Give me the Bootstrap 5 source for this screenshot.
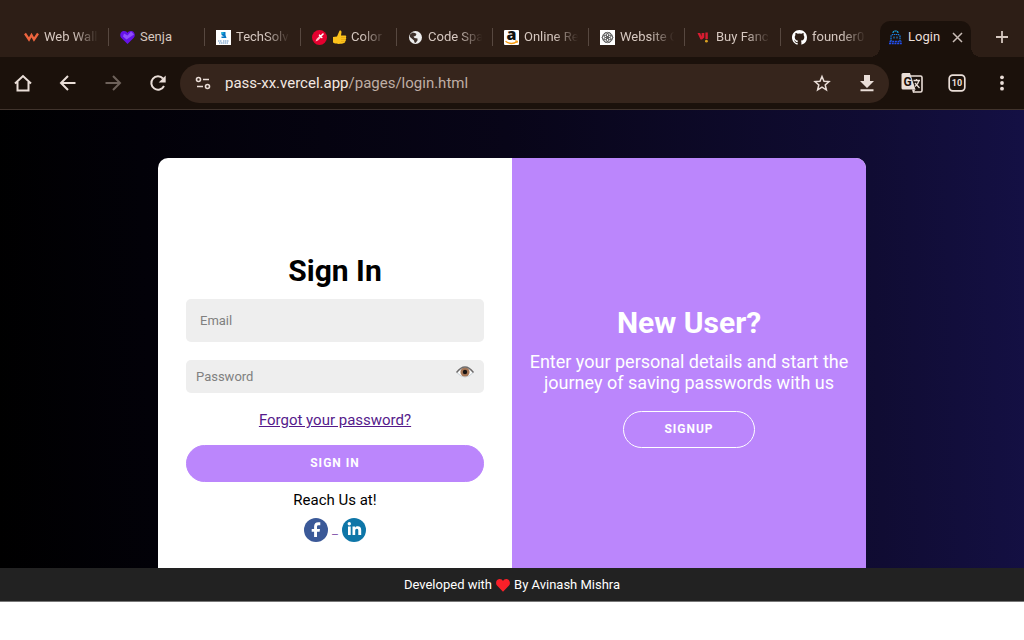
<!DOCTYPE html>
<html lang="en">
<head>
<meta charset="utf-8">
<meta name="viewport" content="width=device-width, initial-scale=1">
<title>Login</title>
<link href="https://cdn.jsdelivr.net/npm/bootstrap@5.3.0/dist/css/bootstrap.min.css" rel="stylesheet">
<style>
  body { font-family: Roboto, "Noto Sans", sans-serif; background: #fff; color: #000; }
  svg { display: block; flex: none; }

  /* Browser chrome */
  .tab-strip { background: #2d1e16; height: 57px; padding-left: 13px; }
  .tab-item { flex: 0 1 96px; min-width: 0; height: 36px; padding: 0 6px 4px 11px; gap: 5px; color: #d6c8c0; font-size: 13px; text-decoration: none; position: relative; }
  .tab-item::after { content: ""; position: absolute; right: 0; top: 7px; width: 1px; height: 18px; background: #574840; }
  .tab-item.no-line::after { display: none; }
  .tab-label { flex: 1 1 0; min-width: 0; overflow: hidden; white-space: nowrap; }
  .tab-fade { -webkit-mask-image: linear-gradient(to right, #000 50%, transparent 92%); mask-image: linear-gradient(to right, #000 50%, transparent 92%); }
  .tab-current { flex: 0 1 91px; margin-left: 3px; padding: 0 6px 4px 8px; background: #1b110b; border-radius: 10px 10px 0 0; color: #eaded8; }
  .tab-current::before, .tab-current::after { content: ""; position: absolute; top: auto; bottom: 0; width: 10px; height: 10px; background: radial-gradient(circle at 0 0, transparent 10px, #1b110b 10px); }
  .tab-current::before { left: -10px; }
  .tab-current::after { right: -10px; background: radial-gradient(circle at 100% 0, transparent 10px, #1b110b 10px); }
  .plain-btn { background: none; border: 0; padding: 0; color: #eaded8; display: flex; align-items: center; justify-content: center; }
  .new-tab { width: 45px; height: 32px; }
  .toolbar-row { background: #1b110b; height: 53px; border-bottom: 1px solid #40332c; }
  .tool-btn { width: 45px; height: 39px; flex: none; }
  .address-bar { height: 39px; border-radius: 20px; background: #36251c; color: #eaded8; }
  .address-text { font-size: 15px; line-height: 24px; color: #bfaea5; }
  .address-text b { font-weight: 400; color: #f3e8e2; }

  /* Login page */
  .login-stage { background: linear-gradient(88deg, #000 0%, #020108 15%, #080518 50%, #100c33 85%, #141044 100%); padding-top: 48px; }
  .login-card { max-width: 708px; min-height: 410px; border-radius: 10px 10px 0 0; background: #fff; overflow: hidden; }
  .form-side { padding: 95px 28px 24px; }
  .promo-side { background: #bb86fc; color: #fff; padding: 147px 16px 24px; }
  .panel-title { font-size: 30px; line-height: 36px; font-weight: 700; margin: 0 0 10px; }
  .field-box { background: #eee; border: 0; border-radius: 5px; font-size: 13px; line-height: 19px; padding: 12px 14px; }
  .field-box::placeholder { color: #808080; }
  .field-tight { padding: 7px 10px; }
  .password-row { margin: 18px 0 15px; }
  .eye-btn { position: absolute; right: 10px; top: 4px; }
  .forgot-link { color: #551a8b; font-size: 15px; line-height: 20px; margin-bottom: 15px; }
  .pill-btn { border-radius: 20px; border: 1px solid #bb86fc; background: #bb86fc; color: #fff; font-size: 12px; line-height: 17px; font-weight: 700; letter-spacing: 1px; padding: 9px 40px; }
  .pill-line { border-color: #fff; }
  .reach-text { font-size: 15px; line-height: 20px; }
  .promo-text { font-size: 18px; line-height: 21px; margin: 0 0 18px; }
  .social-links { gap: 4px; color: #8a5fb0; font-size: 13px; line-height: 24px; }
  .site-footer { background: #222; color: #fff; font-size: 13px; line-height: 19px; padding: 7px 0; border-bottom: 1px solid #777; }
</style>
</head>
<body>
<header>
  <nav class="tab-strip d-flex align-items-end" aria-label="Open tabs">
    <a class="tab-item d-flex align-items-center" href="#">
      <svg width="15" height="15" viewBox="0 0 15 15"><path d="M1 3.500l4 6 2.500-4.500 2.500 4.500 4-6" fill="none" stroke="#ed643e" stroke-width="2.300"/></svg>
      <span class="tab-label tab-fade">Web Wall</span></a>
    <a class="tab-item d-flex align-items-center" href="#">
      <svg width="15" height="15" viewBox="0 0 15 15"><path d="M7.500 14L1.200 7.800C-.7 5.600.2 1.800 3.300 1.100c1.700-.4 3.300.4 4.200 1.800C8.400 1.500 10 .7 11.700 1.100c3.100.7 4 4.500 2.100 6.700z" fill="#6512e6"/><path d="M6.500 9.500L3 6.500 4 3.500l3.500 2 3.500-4 3 3z" fill="#8f4ffa"/></svg>
      <span class="tab-label">Senja</span></a>
    <a class="tab-item d-flex align-items-center" href="#">
      <svg width="15" height="15" viewBox="0 0 15 15"><path fill="#fff" d="M0 0h15v15H0z"/><path d="M5.500 2h4v3l1 3h-5V6.500H8L5.500 5z" fill="#0878c4"/><path d="M5.500 2h2v2h-2z" fill="#20b6dc"/><path d="M2 11h4M7 11h6M3 13h9" stroke="#5b8bc0" stroke-width="1.200" stroke-dasharray="1.500 .5"/></svg>
      <span class="tab-label tab-fade">TechSolv</span></a>
    <a class="tab-item d-flex align-items-center" href="#">
      <svg width="15" height="15" viewBox="0 0 15 15"><circle cx="7.500" cy="7.500" r="7.500" fill="#e4002f"/><path d="M3.500 11.500l1-2.500 3.500-3.500 1.500 1.500L6 10.500z" fill="#ffc0cb"/><path d="M7.500 5.200l2.300 2.300M8.700 6.300l2.300-2.300" stroke="#fff" stroke-width="1.600" stroke-linecap="round"/></svg>
      <span class="tab-label tab-fade d-flex align-items-center gap-1"><svg width="15" height="15" viewBox="0 0 15 15"><path d="M1 7l4-.5L7.500.8c.9-.9 2.200.1 2 1.500L9 5.500h4c1.300 0 1.700 1.600.7 2 .8.500.7 1.700-.1 2 .5.700.3 1.600-.5 1.900.3.800-.2 1.600-1.100 1.600-2.500 1.200-7.500 1-9 .5L1 12.500z" fill="#fcc21b"/><path d="M9 7.500h4M9 9.500h4M9 11.500h3.500" stroke="#df9c12" stroke-width=".6"/></svg>Color</span></a>
    <a class="tab-item d-flex align-items-center" href="#">
      <svg width="15" height="15" viewBox="0 0 15 15"><circle cx="7.500" cy="7.500" r="6.500" fill="#eee"/><path d="M2 4.500l2.500-2L7 3l1.500 1L7.500 6 5.500 6.500 6.500 8 9.500 8.500 9.500 10.500 7.500 13 6.500 12.500 6 10.500 2 7z" fill="#3d302a"/></svg>
      <span class="tab-label tab-fade">Code Spa</span></a>
    <a class="tab-item d-flex align-items-center" href="#">
      <svg width="15" height="15" viewBox="0 0 15 15"><rect width="15" height="15" rx="1" fill="#fff"/><text x="7.500" y="10" text-anchor="middle" font-family="Open Sans, sans-serif" font-size="16" font-weight="800" fill="#111">a</text><path d="M1.500 11.200c4 3 8 2.700 11.500.5" fill="none" stroke="#f79a0e" stroke-width="1.400"/><path d="M11 11h2.500l-.6 2" fill="none" stroke="#f79a0e"/></svg>
      <span class="tab-label tab-fade">Online Re</span></a>
    <a class="tab-item d-flex align-items-center" href="#">
      <svg width="15" height="15" viewBox="0 0 15 15"><path fill="#fff" d="M0 0h15v15H0z"/><g fill="none" stroke="#555" stroke-width=".8"><ellipse cx="7.500" cy="5.200" rx="3.700" ry="2.900"/><ellipse cx="7.500" cy="5.200" rx="3.700" ry="2.900" transform="rotate(60 7.500 7.500)"/><ellipse cx="7.500" cy="5.200" rx="3.700" ry="2.900" transform="rotate(120 7.500 7.500)"/><ellipse cx="7.500" cy="5.200" rx="3.700" ry="2.900" transform="rotate(180 7.500 7.500)"/><ellipse cx="7.500" cy="5.200" rx="3.700" ry="2.900" transform="rotate(240 7.500 7.500)"/><ellipse cx="7.500" cy="5.200" rx="3.700" ry="2.900" transform="rotate(300 7.500 7.500)"/></g></svg>
      <span class="tab-label tab-fade">Website C</span></a>
    <a class="tab-item d-flex align-items-center" href="#">
      <svg width="15" height="15" viewBox="0 0 15 15"><path d="M1.500 3h2.700L5.600 6.500V3h2.700v4.500L6 9.500H4.500z" fill="#d91c31"/><path d="M10.600 2.500V9" stroke="#d91c31" stroke-width="2.400"/><circle cx="10.400" cy="11.200" r="1.400" fill="#d8a022"/></svg>
      <span class="tab-label tab-fade">Buy Fanc</span></a>
    <a class="tab-item no-line d-flex align-items-center" href="#">
      <svg width="15" height="15" viewBox="0 0 16 16"><path fill="#fff" d="M8 0C3.580 0 0 3.580 0 8c0 3.540 2.290 6.530 5.470 7.590.4.070.55-.17.55-.38 0-.19-.01-.82-.01-1.490-2.010.37-2.530-.49-2.690-.94-.09-.23-.48-.94-.82-1.130-.28-.15-.68-.52-.01-.53.63-.01 1.080.58 1.230.82.72 1.210 1.870.87 2.330.66.070-.52.28-.87.51-1.070-1.780-.2-3.640-.89-3.640-3.950 0-.87.31-1.590.82-2.150-.08-.2-.36-1.020.08-2.120 0 0 .67-.21 2.200.82a7.600 7.600 0 0 1 4 0c1.530-1.040 2.200-.82 2.200-.82.44 1.100.16 1.920.08 2.120.51.56.82 1.270.82 2.150 0 3.070-1.870 3.750-3.650 3.950.29.25.54.73.54 1.480 0 1.070-.01 1.930-.01 2.200 0 .21.15.46.55.38A8 8 0 0 0 16 8c0-4.420-3.580-8-8-8z"/></svg>
      <span class="tab-label tab-fade">founder0</span></a>
    <div class="tab-item no-line-x tab-current d-flex align-items-center">
      <svg width="15" height="15" viewBox="0 0 15 15" fill="none"><path d="M5 3q0-2 2.500-2T10 3" stroke="#18aef0" stroke-width="1.200" stroke-dasharray="2 .6"/><path d="M3 11V6l1.500-1.500h6L12 6v5" stroke="#1883e8" stroke-width="1.200" stroke-dasharray="1.500 .6"/><path d="M6 6.500v2M9 6.500v2" stroke="#238ee8"/><path d="M1.500 11.500h12M1 13.500h13" stroke="#224ff0" stroke-width="1.300" stroke-dasharray="2 .7"/></svg>
      <a class="tab-label text-reset text-decoration-none" href="#" aria-current="page">Login</a>
      <button class="plain-btn" type="button" aria-label="Close tab"><svg width="15" height="15" viewBox="0 0 15 15"><path d="M3 3l9 9m0-9l-9 9" stroke="#c9bdb6" stroke-width="1.500"/></svg></button>
    </div>
    <button class="plain-btn new-tab ms-auto mb-1" type="button" aria-label="New tab"><svg width="14" height="14" viewBox="0 0 14 14"><path d="M7 1v12M1 7h12" stroke="#d6c8c0" stroke-width="1.800"/></svg></button>
  </nav>
  <div class="toolbar-row d-flex align-items-center">
    <button class="plain-btn tool-btn" type="button" aria-label="Home"><svg width="20" height="20" viewBox="0 0 20 20"><path d="M2 10.500L10 3l8 7.500M4.500 9v8.500h11V9" fill="none" stroke="currentColor" stroke-width="2"/></svg></button>
    <button class="plain-btn tool-btn" type="button" aria-label="Back"><svg width="20" height="20" viewBox="0 0 20 20"><path d="M17.500 10H4M10 3l-7 7 7 7" fill="none" stroke="currentColor" stroke-width="2"/></svg></button>
    <button class="plain-btn tool-btn" type="button" aria-label="Forward" disabled><svg width="20" height="20" viewBox="0 0 20 20"><path d="M2.500 10H16M10 3l7 7-7 7" fill="none" stroke="#6e625b" stroke-width="2"/></svg></button>
    <button class="plain-btn tool-btn" type="button" aria-label="Reload"><svg width="20" height="20" viewBox="0 0 20 20"><path d="M16 13A6.700 6.700 0 1 1 15 5.500" fill="none" stroke="currentColor" stroke-width="2"/><path d="M17.700 2.500v7h-7z" fill="currentColor"/></svg></button>
    <div class="address-bar d-flex align-items-center flex-grow-1">
      <button class="plain-btn tool-btn" type="button" aria-label="Site settings"><svg width="16" height="16" viewBox="0 0 16 16"><g fill="none" stroke="currentColor" stroke-width="1.600"><circle cx="3.500" cy="4.500" r="2"/><path d="M8 4.500h6M2 11.500h6"/><circle cx="12.500" cy="11.500" r="2"/></g></svg></button>
      <div class="address-text flex-grow-1"><b>pass-xx.vercel.app</b>/pages/login.html</div>
      <button class="plain-btn tool-btn" type="button" aria-label="Bookmark"><svg width="18" height="18" viewBox="0 0 18 18"><path d="M9 2.500l2 4.700 5 .4-3.800 3.300 1.200 5L9 13.200l-4.400 2.700 1.200-5L2 7.600l5-.4z" fill="none" stroke="currentColor" stroke-width="1.500"/></svg></button>
      <button class="plain-btn tool-btn" type="button" aria-label="Download"><svg width="18" height="18" viewBox="0 0 18 18"><path d="M6 1h6v6h4l-7 7-7-7h4zM2.500 15.200h13v2h-13z" fill="currentColor"/></svg></button>
    </div>
    <button class="plain-btn tool-btn" type="button" aria-label="Translate"><svg width="22" height="22" viewBox="0 0 22 22"><path d="M8 4h11.500q1.500 0 1.500 1.500v13q0 1.500-1.500 1.500H12" fill="none" stroke="currentColor" stroke-width="1.600"/><path d="M2 1h7l5.500 16.500H2q-1.500 0-1.500-1.500V2.500Q.5 1 2 1z" fill="currentColor"/><path d="M11 17.500h3.500L12 21z" fill="currentColor"/><text x="6.500" y="13.500" text-anchor="middle" font-size="12" font-weight="700" font-family="Roboto, sans-serif" fill="#1b110b">G</text><path d="M12.500 8.500H19M15.500 7v1.500M18 8.500q-1 4-4 6M14 11l4.500 5" fill="none" stroke="currentColor" stroke-width="1.300"/></svg></button>
    <button class="plain-btn tool-btn" type="button" aria-label="10 open tabs"><svg width="18" height="18" viewBox="0 0 18 18"><rect x="1.200" y="1.200" width="15.600" height="15.600" rx="3.500" fill="none" stroke="currentColor" stroke-width="1.700"/><text x="9" y="12.300" text-anchor="middle" font-size="9" font-weight="700" font-family="Roboto, sans-serif" fill="currentColor">10</text></svg></button>
    <button class="plain-btn tool-btn" type="button" aria-label="Menu"><svg width="18" height="18" viewBox="0 0 18 18" fill="currentColor"><circle cx="9" cy="3.300" r="1.900"/><circle cx="9" cy="9" r="1.900"/><circle cx="9" cy="14.700" r="1.900"/></svg></button>
  </div>
</header>

<main class="login-stage">
  <div class="login-card row g-0 mx-auto">
    <form class="form-side col-6 text-center">
      <h1 class="panel-title">Sign In</h1>
      <label class="visually-hidden" for="email">Email</label>
      <input class="field-box w-100 d-block" id="email" type="email" placeholder="Email">
      <div class="password-row position-relative">
        <label class="visually-hidden" for="password">Password</label>
        <input class="field-box field-tight w-100 d-block" id="password" type="password" placeholder="Password">
        <button class="plain-btn eye-btn" type="button" aria-label="Show password"><svg width="18" height="16" viewBox="0 0 18 16"><path d="M.8 8.500Q9-1 17.200 8.500 9 17.500.8 8.500z" fill="#fafafa" stroke="#b9c4cc" stroke-width=".8"/><circle cx="9" cy="8" r="4.600" fill="#a57656"/><circle cx="9" cy="8" r="2.200" fill="#171313"/><path d="M.5 8.500Q9-2.500 17.500 8.500" fill="none" stroke="#6f6c6b" stroke-width="1.400"/></svg></button>
      </div>
      <a class="forgot-link d-inline-block" href="#">Forgot your password?</a>
      <button class="pill-btn w-100 d-block" type="submit">SIGN IN</button>
      <div class="reach-text mt-2">Reach Us at!</div>
      <div class="social-links d-flex justify-content-center mt-2">
        <a href="#" aria-label="Facebook"><svg width="24" height="24" viewBox="0 0 24 24"><circle cx="12" cy="12" r="12" fill="#3b5998"/><path d="M16.300 4.300v2.900h-1.700c-1.300 0-1.600.6-1.600 1.600V11h3l-.4 2.800H13V19h-2.900v-5.200H7.700V11h2.400V8.500c0-2.800 1.600-4.300 4.100-4.300z" fill="#fff"/></svg></a>
        <span aria-hidden="true">_</span>
        <a href="#" aria-label="LinkedIn"><svg width="24" height="24" viewBox="0 0 24 24"><circle cx="12" cy="12" r="12" fill="#0e76a8"/><path d="M6 8.500h2.700V17H6zM10.500 8.500h2.600v1.200c.6-.9 1.400-1.400 2.600-1.400 2.500 0 3.500 1.500 3.500 4V17h-2.900v-4.200c0-1.200-.3-2.100-1.400-2.100-1.200 0-1.700.9-1.700 2.100V17h-2.700z" fill="#fff"/><circle cx="7.300" cy="5.700" r="1.700" fill="#fff"/></svg></a>
      </div>
    </form>
    <section class="promo-side col-6 text-center">
      <h2 class="panel-title">New User?</h2>
      <p class="promo-text">Enter your personal details and start the journey of saving passwords with us</p>
      <button class="pill-btn pill-line" type="button">SIGNUP</button>
    </section>
  </div>
</main>

<footer class="site-footer d-flex justify-content-center align-items-center gap-1">
  <span>Developed with</span>
  <svg width="14" height="14" viewBox="0 0 14 14" role="img" aria-label="love"><path d="M7 13.700L1 7.500C-.8 5.400.1 1.400 3.300 1 5 .8 6.300 1.600 7 3c.7-1.400 2-2.200 3.700-2 3.200.4 4.100 4.400 2.300 6.500z" fill="#fb2029"/></svg>
  <span>By Avinash Mishra</span>
</footer>
<script src="https://cdn.jsdelivr.net/npm/bootstrap@5.3.0/dist/js/bootstrap.bundle.min.js"></script>
</body>
</html>
